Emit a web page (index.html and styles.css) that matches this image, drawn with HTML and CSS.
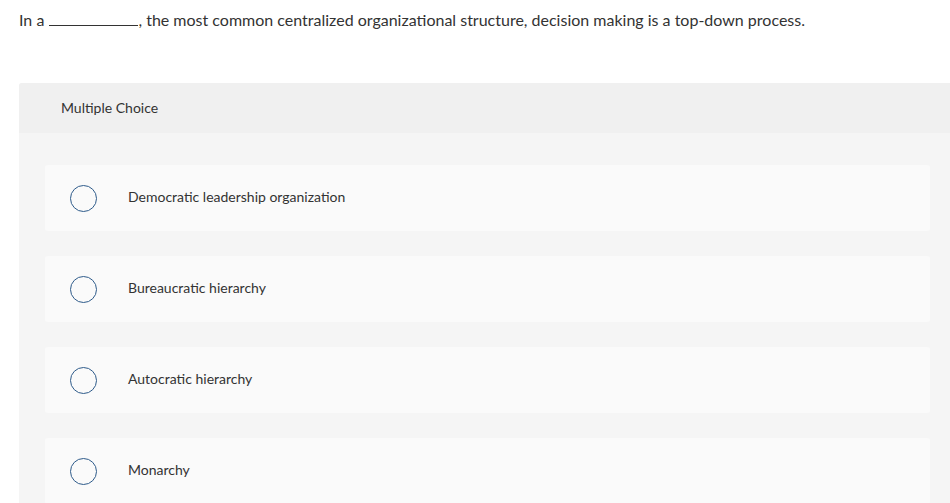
FILE: index.html
```html
<!DOCTYPE html>
<html>
<head>
<meta charset="utf-8">
<link rel="stylesheet" href="styles.css">
</head>
<body>
<div class="page">
  <p class="question">In a <span class="blank"></span>, the most common centralized organizational structure, decision making is a top-down process.</p>
  <div class="panel">
    <div class="panel-head">Multiple Choice</div>
    <div class="panel-body">
      <div class="option"><span class="radio"></span><span class="label">Democratic leadership organization</span></div>
      <div class="option"><span class="radio"></span><span class="label">Bureaucratic hierarchy</span></div>
      <div class="option"><span class="radio"></span><span class="label">Autocratic hierarchy</span></div>
      <div class="option"><span class="radio"></span><span class="label">Monarchy</span></div>
    </div>
  </div>
</div>
</body>
</html>
```
FILE: styles.css
```css
html, body {
  margin: 0;
  padding: 0;
  background: #ffffff;
  overflow: hidden;
}
.page {
  font-family: "Lato", "Open Sans", sans-serif;
  color: #333333;
  padding-left: 19px;
}
.question {
  margin: 0;
  padding-top: 9px;
  font-size: 16px;
  line-height: 21px;
  height: 74px;
}
.blank {
  display: inline-block;
  width: 89px;
  border-bottom: 1px solid #333333;
  vertical-align: baseline;
  margin-left: 1px;
}
.panel {
  background: #f5f5f5;
  border-top-left-radius: 3px;
  overflow: hidden;
}
.panel-head {
  background: #f0f0f0;
  height: 50px;
  display: flex;
  align-items: center;
  padding-left: 42px;
  font-size: 14px;
  padding-bottom: 1px;
  box-sizing: border-box;
}
.panel-body {
  padding: 32px 20px 0 26px;
  display: flex;
  flex-direction: column;
  gap: 25px;
}
.option {
  background: #fafafa;
  border-radius: 3px;
  height: 66px;
  display: flex;
  align-items: center;
  padding-left: 25px;
}
.radio {
  width: 25px;
  height: 25px;
  border: 1.5px solid #2e5b8a;
  border-radius: 50%;
  box-sizing: content-box;
  flex: none;
}
.label {
  margin-left: 31px;
  font-size: 14px;
  line-height: 18px;
  margin-bottom: 2px;
}
```
